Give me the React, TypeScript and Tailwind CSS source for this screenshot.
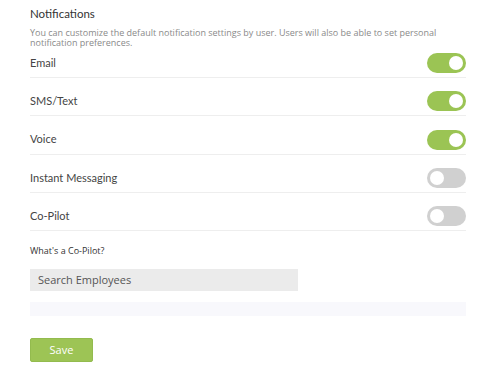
import React, { useState } from "react";

function Toggle({ on }: { on: boolean }) {
  return (
    <div
      className={
        on
          ? "relative h-[20px] w-[39px] rounded-full bg-[#9bc454]"
          : "relative h-[20px] w-[39px] rounded-full bg-[#d0d0d0]"
      }
    >
      <div
        className={
          on
            ? "absolute right-[3px] top-[3px] h-[14px] w-[14px] rounded-full bg-white"
            : "absolute left-[3px] top-[3px] h-[14px] w-[14px] rounded-full bg-white"
        }
      />
    </div>
  );
}

const rows = [
  { label: "Email", on: true },
  { label: "SMS/Text", on: true },
  { label: "Voice", on: true },
  { label: "Instant Messaging", on: false },
  { label: "Co-Pilot", on: false },
];

export default function App() {
  const [items] = useState(rows);
  return (
    <div className="min-h-[376px] w-[491px] bg-white px-[30px] pt-[6px]" style={{ fontFamily: "Lato, 'Open Sans', sans-serif" }}>
      <div className="w-[436px]">
        <h2 className="text-[11.5px] leading-[16px] text-[#333333]">Notifications</h2>
        <p className="mt-[6px] text-[9px] leading-[10px] text-[#8a8a8a]" style={{ fontFamily: "'Open Sans', sans-serif" }}>
          You can customize the default notification settings by user. Users will also be able to set personal notification preferences.
        </p>
        <div className="mt-[5px] flex flex-col gap-[13.3px]">
          {items.map((r) => (
            <div key={r.label} className="flex items-center justify-between border-b border-[#eeeeee] pb-[4px]">
              <div className="flex h-[20px] items-center text-[11px] text-[#444444]">{r.label}</div>
              <Toggle on={r.on} />
            </div>
          ))}
        </div>
        <div className="mt-[14px] text-[9px] leading-[12px] text-[#333333]" style={{ fontFamily: "'Open Sans', sans-serif" }}>
          What's a Co-Pilot?
        </div>
        <div className="mt-[12px] flex h-[22px] w-[268px] items-center bg-[#ebebeb] px-[8px] text-[11px] text-[#555555]" style={{ fontFamily: "'Open Sans', sans-serif" }}>
          Search Employees
        </div>
        <div className="mt-[11px] h-[14px] w-[436px] bg-[#f8f8fc]" />
        <button className="mt-[22px] flex h-[24px] w-[63px] items-center justify-center rounded-[2px] border border-[#93bb4e] bg-[#9dc455] text-[11px] text-white" style={{ fontFamily: "'Open Sans', sans-serif" }}>
          Save
        </button>
      </div>
    </div>
  );
}
